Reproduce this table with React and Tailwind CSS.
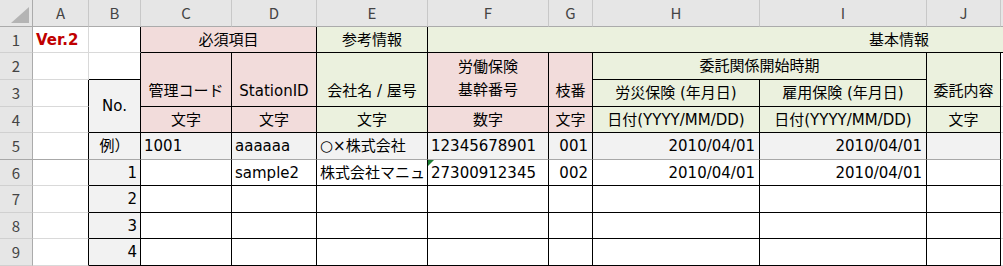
import React from "react";
import clsx from "clsx";

const CS = ["", "col-start-1", "col-start-2", "col-start-3", "col-start-4", "col-start-5", "col-start-6", "col-start-7", "col-start-8", "col-start-9", "col-start-10", "col-start-11", "col-start-12"];
const CSPAN = ["", "col-span-1", "col-span-2", "col-span-3", "col-span-4", "col-span-5", "col-span-6"];
const RS = ["", "row-start-1", "row-start-2", "row-start-3", "row-start-4", "row-start-5", "row-start-6", "row-start-7", "row-start-8", "row-start-9", "row-start-10"];
const RSPAN = ["", "row-span-1", "row-span-2", "row-span-3"];

const PINK = "bg-[#f2dcdb]";
const GREEN = "bg-[#ebf1de]";
const GRAY = "bg-[#f2f2f2]";
const BOX = "border-r border-b border-black";
const GRID = "border-r border-b border-[#d9d9d9]";

function Cell({ c, r, w = 1, h = 1, className = "", children }) {
  return (
    <div
      className={clsx(
        "flex min-w-0 overflow-hidden whitespace-nowrap leading-[20px]",
        CS[c],
        CSPAN[w],
        RS[r],
        RSPAN[h],
        className
      )}
    >
      {children}
    </div>
  );
}

const LETTERS = ["A", "B", "C", "D", "E", "F", "G", "H", "I", "J", ""];

function Corner() {
  return (
    <Cell c={1} r={1} className="bg-[#e6e6e6] border-r border-b border-[#ababab] items-end justify-end">
      <svg width="24" height="20" viewBox="0 0 24 20" className="mb-[1px] mr-[1px]">
        <polygon points="22,2 22,18 4,18" fill="#b4b4b4" />
      </svg>
    </Cell>
  );
}

export default function App() {
  const head = "items-center justify-center";
  const bodyRows = [
    { n: 5, b: "例）", data: ["1001", "aaaaaa", "○×株式会社", "12345678901", "001", "2010/04/01", "2010/04/01", ""] },
    { n: 6, b: "1", data: ["", "sample2", "株式会社マニュ", "27300912345", "002", "2010/04/01", "2010/04/01", ""] },
    { n: 7, b: "2", data: ["", "", "", "", "", "", "", ""] },
    { n: 8, b: "3", data: ["", "", "", "", "", "", "", ""] },
    { n: 9, b: "4", data: ["", "", "", "", "", "", "", ""] },
  ];
  const rightAlign = [false, false, false, false, true, true, true, false];

  return (
    <div
      className="w-[1003px] h-[266px] overflow-hidden bg-white text-[15px] text-black"
      style={{ fontFamily: '"DejaVu Sans", "Noto Sans CJK JP", sans-serif' }}
    >
      <div className="grid w-max grid-cols-[33px_56px_52px_91px_85px_111px_121px_44px_167px_167px_74px_369px] grid-rows-[27px_26px_27px_27px_26px_27px_26px_27px_26px_27px]">
        <Corner />
        {LETTERS.map((l, i) => (
          <Cell
            key={i}
            c={i + 2}
            r={1}
            className="bg-[#e6e6e6] border-r border-r-[#c8c8c8] border-b border-b-[#ababab] items-center justify-center text-[#444]"
          >
            <span style={{ fontFamily: '"Noto Sans CJK JP", sans-serif' }}>{l}</span>
          </Cell>
        ))}
        {[1, 2, 3, 4, 5, 6, 7, 8, 9].map((n) => (
          <Cell
            key={n}
            c={1}
            r={n + 1}
            className={clsx(
              "bg-[#e6e6e6] border-r border-r-[#ababab] border-b items-center justify-center text-[#444]",
              n === 5 ? "border-b-[#a8a8a8]" : "border-b-[#d0d0d0]"
            )}
          >
            <span style={{ fontFamily: '"Noto Sans CJK JP", sans-serif' }}>{n}</span>
          </Cell>
        ))}

        {/* row 1 */}
        <Cell c={2} r={2} className={clsx(GRID, "items-center pl-[3px] font-bold text-[#c00000]")}>Ver.2</Cell>
        <Cell c={3} r={2} className="border-r border-r-black border-b border-b-[#d9d9d9]" />
        <Cell c={4} r={2} w={2} className={clsx(BOX, PINK, head)}>必須項目</Cell>
        <Cell c={6} r={2} className={clsx(BOX, GREEN, head)}>参考情報</Cell>
        <Cell c={7} r={2} w={6} className={clsx("border-b border-black", GREEN, head)}>基本情報</Cell>

        {/* row 2-4 */}
        <Cell c={2} r={3} className={GRID} />
        <Cell c={3} r={3} className={BOX} />
        <Cell c={4} r={3} h={2} className={clsx(BOX, PINK, "items-end justify-center pb-[5px]")}>管理コード</Cell>
        <Cell c={5} r={3} h={2} className={clsx(BOX, PINK, "items-end justify-center pb-[5px]")}>StationID</Cell>
        <Cell c={6} r={3} h={2} className={clsx(BOX, GREEN, "items-end justify-center pb-[5px]")}>会社名 / 屋号</Cell>
        <Cell c={7} r={3} h={2} className={clsx(BOX, PINK, "flex-col items-center justify-center leading-[23px] pb-[1px]")}>
          <span>労働保険</span>
          <span>基幹番号</span>
        </Cell>
        <Cell c={8} r={3} h={2} className={clsx(BOX, PINK, "items-end justify-center pb-[5px]")}>枝番</Cell>
        <Cell c={9} r={3} w={2} className={clsx(BOX, GREEN, head)}>委託関係開始時期</Cell>
        <Cell c={11} r={3} h={2} className={clsx(BOX, GREEN, "items-end justify-center pb-[5px]")}>委託内容</Cell>

        <Cell c={2} r={4} className="border-r border-r-black border-b border-b-[#d9d9d9]" />
        <Cell c={3} r={4} h={2} className={clsx(BOX, GRAY, head)}>No.</Cell>
        <Cell c={9} r={4} className={clsx(BOX, GREEN, head)}>労災保険 (年月日)</Cell>
        <Cell c={10} r={4} className={clsx(BOX, GREEN, head)}>雇用保険 (年月日)</Cell>

        <Cell c={2} r={5} className="border-r border-r-black border-b border-b-[#d9d9d9]" />
        <Cell c={4} r={5} className={clsx(BOX, PINK, head)}>文字</Cell>
        <Cell c={5} r={5} className={clsx(BOX, PINK, head)}>文字</Cell>
        <Cell c={6} r={5} className={clsx(BOX, GREEN, head)}>文字</Cell>
        <Cell c={7} r={5} className={clsx(BOX, PINK, head)}>数字</Cell>
        <Cell c={8} r={5} className={clsx(BOX, PINK, head)}>文字</Cell>
        <Cell c={9} r={5} className={clsx(BOX, GREEN, head)}>日付(YYYY/MM/DD)</Cell>
        <Cell c={10} r={5} className={clsx(BOX, GREEN, head)}>日付(YYYY/MM/DD)</Cell>
        <Cell c={11} r={5} className={clsx(BOX, GREEN, head)}>文字</Cell>

        {/* K column beyond the view */}
        {[2, 3, 4, 5, 6, 7, 8, 9].map((r) => (
          <Cell key={"k" + r} c={12} r={r + 1} className={GRID} />
        ))}

        {/* data rows */}
        {bodyRows.map((row) => (
          <React.Fragment key={row.n}>
            <Cell
              c={2}
              r={row.n + 1}
              className={clsx(
                "border-r border-r-black border-b",
                row.n === 5 ? "border-b-[#a8a8a8]" : "border-b-[#d9d9d9]"
              )}
            />
            <Cell
              c={3}
              r={row.n + 1}
              className={clsx(
                BOX,
                GRAY,
                "items-center",
                row.n === 5 ? "justify-center border-b-[#a8a8a8]" : "justify-end pr-[3px]"
              )}
            >
              {row.b}
            </Cell>
            {row.data.map((d, i) => (
              <Cell
                key={i}
                c={i + 4}
                r={row.n + 1}
                className={clsx(
                  BOX,
                  row.n === 5 ? clsx(GRAY, "border-b-[#a8a8a8]") : "bg-white",
                  "relative items-center",
                  rightAlign[i] ? "justify-end pr-[4px]" : "pl-[3px]"
                )}
              >
                {row.n === 6 && i === 3 && (
                  <span className="absolute left-0 top-0 h-0 w-0 border-t-[6px] border-r-[6px] border-t-[#1e7e34] border-r-transparent" />
                )}
                {d}
              </Cell>
            ))}
          </React.Fragment>
        ))}
      </div>
    </div>
  );
}
